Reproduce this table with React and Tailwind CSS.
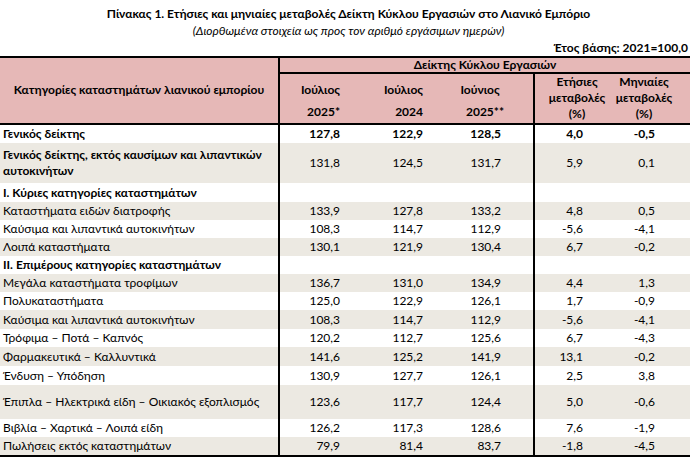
import React from 'react';

// Row data for the retail turnover index table
const rows = [
  { label: 'Γενικός δείκτης', v: ['127,8', '122,9', '128,5', '4,0', '-0,5'], bold: true, h: 'h-[18px]' },
  { label: ['Γενικός δείκτης, εκτός καυσίμων και λιπαντικών', 'αυτοκινήτων'], v: ['131,8', '124,5', '131,7', '5,9', '0,1'], bold: true, h: 'h-[40px]' },
  { label: 'I. Κύριες κατηγορίες καταστημάτων', v: null, bold: true, h: 'h-[19px]' },
  { label: 'Καταστήματα ειδών διατροφής', v: ['133,9', '127,8', '133,2', '4,8', '0,5'], h: 'h-[18px]' },
  { label: 'Καύσιμα και λιπαντικά αυτοκινήτων', v: ['108,3', '114,7', '112,9', '-5,6', '-4,1'], h: 'h-[18px]' },
  { label: 'Λοιπά καταστήματα', v: ['130,1', '121,9', '130,4', '6,7', '-0,2'], h: 'h-[18px]' },
  { label: 'II. Επιμέρους κατηγορίες καταστημάτων', v: null, bold: true, h: 'h-[18px]' },
  { label: 'Μεγάλα καταστήματα τροφίμων', v: ['136,7', '131,0', '134,9', '4,4', '1,3'], h: 'h-[18px]' },
  { label: 'Πολυκαταστήματα', v: ['125,0', '122,9', '126,1', '1,7', '-0,9'], h: 'h-[18px]' },
  { label: 'Καύσιμα και λιπαντικά αυτοκινήτων', v: ['108,3', '114,7', '112,9', '-5,6', '-4,1'], h: 'h-[19px]' },
  { label: 'Τρόφιμα – Ποτά – Καπνός', v: ['120,2', '112,7', '125,6', '6,7', '-4,3'], h: 'h-[18px]' },
  { label: 'Φαρμακευτικά – Καλλυντικά', v: ['141,6', '125,2', '141,9', '13,1', '-0,2'], h: 'h-[19px]' },
  { label: 'Ένδυση – Υπόδηση', v: ['130,9', '127,7', '126,1', '2,5', '3,8'], h: 'h-[19px]' },
  { label: 'Έπιπλα – Ηλεκτρικά είδη – Οικιακός εξοπλισμός', v: ['123,6', '117,7', '124,4', '5,0', '-0,6'], h: 'h-[34px]' },
  { label: 'Βιβλία – Χαρτικά – Λοιπά είδη', v: ['126,2', '117,3', '128,6', '7,6', '-1,9'], h: 'h-[18px]' },
  { label: 'Πωλήσεις εκτός καταστημάτων', v: ['79,9', '81,4', '83,7', '-1,8', '-4,5'], h: 'h-[18px]' },
];

// right padding per numeric column, to line the figures up with the reference
const numPad = ['pr-[25px]', 'pr-[22px]', 'pr-[32px]', 'pr-[29px]', 'pr-[35px]'];

function Row({ row, index }) {
  const bg = index % 2 === 1 ? 'bg-[#ece9e2]' : 'bg-white';
  return (
    <div className={`grid grid-cols-[280px_85px_80px_90px_77px_78px] ${row.h} ${bg}`}>
      <div className={`flex flex-col justify-center pl-[3px] border-r-2 border-black leading-[16px] ${row.bold ? 'font-bold' : ''}`}>
        {Array.isArray(row.label) ? row.label.map((l) => <span key={l}>{l}</span>) : <span>{row.label}</span>}
      </div>
      {[0, 1, 2, 3, 4].map((i) => (
        <div
          key={i}
          className={`flex items-center justify-end ${numPad[i]} ${i === 2 ? 'border-r-2 border-black' : ''} ${row.bold && index === 0 ? 'font-bold' : ''}`}
        >
          {row.v ? row.v[i] : ''}
        </div>
      ))}
    </div>
  );
}

export default function App() {
  return (
    <div className="w-[697px] h-[467px] bg-white text-black font-['Lato','Carlito','Open_Sans',sans-serif] text-[12px] overflow-hidden">
      {/* Title */}
      <div className="pt-[6px] text-center font-bold text-[12px] leading-[16px]">
        Πίνακας 1. Ετήσιες και μηνιαίες μεταβολές Δείκτη Κύκλου Εργασιών στο Λιανικό Εμπόριο
      </div>
      <div className="text-center italic leading-[16px] mt-[1px]">
        (Διορθωμένα στοιχεία ως προς τον αριθμό εργάσιμων ημερών)
      </div>
      <div className="text-right font-bold pr-[9px] leading-[16px] mt-[1px]">Έτος βάσης: 2021=100,0</div>

      {/* Table */}
      <div className="w-[690px]">
        {/* Header */}
        <div className="flex h-[69px] border-t-2 border-b-2 border-black bg-[#e6b8b7] font-bold">
          <div className="w-[280px] flex items-center justify-center border-r-2 border-black pb-[2px]">
            Κατηγορίες καταστημάτων λιανικού εμπορίου
          </div>
          <div className="flex-1 flex flex-col">
            <div className="h-[16px] flex items-center justify-center border-b-2 border-black">
              Δείκτης Κύκλου Εργασιών
            </div>
            <div className="flex-1 grid grid-cols-[85px_80px_90px_77px_78px]">
              <div className="flex flex-col items-end justify-between pr-[25px] pt-[7px] pb-[2px]">
                <span>Ιούλιος</span>
                <span>2025*</span>
              </div>
              <div className="flex flex-col items-end justify-between pr-[22px] pt-[7px] pb-[2px]">
                <span>Ιούλιος</span>
                <span>2024</span>
              </div>
              <div className="flex flex-col items-center justify-between pr-[8px] pt-[7px] pb-[2px] border-r-2 border-black">
                <span className="pr-[10px]">Ιούνιος</span>
                <span>2025**</span>
              </div>
              <div className="flex flex-col items-center justify-between pl-[7px] pt-[1px] pb-[2px] leading-[14px]">
                <span>Ετήσιες</span>
                <span>μεταβολές</span>
                <span>(%)</span>
              </div>
              <div className="flex flex-col items-center justify-between pr-[14px] pt-[1px] pb-[2px] leading-[14px]">
                <span>Μηνιαίες</span>
                <span>μεταβολές</span>
                <span>(%)</span>
              </div>
            </div>
          </div>
        </div>

        {/* Body */}
        <div className="border-b-2 border-black">
          {rows.map((row, i) => (
            <Row key={i} row={row} index={i} />
          ))}
        </div>
      </div>
    </div>
  );
}
